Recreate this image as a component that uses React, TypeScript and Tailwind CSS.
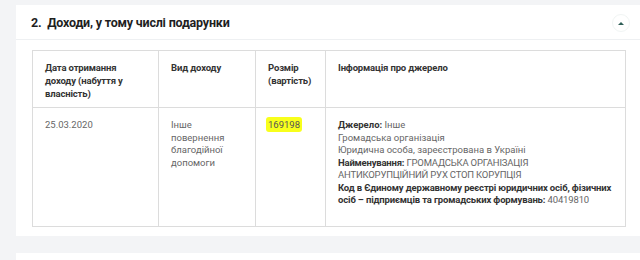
import React from 'react';

const font = { fontFamily: 'Roboto, "Liberation Sans", Arial, sans-serif' };

const cell = 'border border-[#dcdcdc] px-3 align-top whitespace-nowrap';

export default function App() {
  return (
    <div className="h-screen overflow-hidden bg-[#f3f4f6] pl-4 pt-[5px]" style={font}>
      <section className="bg-white">
        {/* Section header */}
        <div className="flex h-[35px] items-center justify-between border-b border-[#eef0f2] pl-[15px] pr-[10px] pt-[2px]">
          <h2 className="text-[12.5px] font-bold tracking-[-0.2px] text-[#1f1f1f]">
            2.&nbsp;&nbsp;Доходи, у тому числі подарунки
          </h2>
          <div className="flex h-[18px] w-[18px] items-center justify-center rounded-full border border-[#f1f5f4]">
            <svg width="6" height="4" viewBox="0 0 6 4">
              <path d="M0 4 L3 1 L6 4 Z" fill="#2f5f57" />
            </svg>
          </div>
        </div>

        {/* Table */}
        <div className="pb-[9px] pl-4 pt-[10px]">
          <table className="w-[593px] table-fixed border-collapse border border-[#dcdcdc] text-left">
            <colgroup>
              <col className="w-[126px]" />
              <col className="w-[97px]" />
              <col className="w-[70px]" />
              <col className="w-[300px]" />
            </colgroup>
            <thead>
              <tr className="h-[57px] text-[9.5px] font-bold leading-[13px] tracking-[-0.15px] text-[#333]">
                <th className={`${cell} pt-[10px] font-bold`}>
                  <div>Дата отримання</div>
                  <div>доходу (набуття у</div>
                  <div>власність)</div>
                </th>
                <th className={`${cell} pt-[10px] font-bold`}>Вид доходу</th>
                <th className={`${cell} pt-[10px] font-bold`}>
                  <div>Розмір</div>
                  <div>(вартість)</div>
                </th>
                <th className={`${cell} pt-[10px] font-bold`}>Інформація про джерело</th>
              </tr>
            </thead>
            <tbody>
              <tr className="h-[119px] text-[9.5px] leading-[12.5px] text-[#666]">
                <td className={`${cell} pt-[11px]`}>25.03.2020</td>
                <td className={`${cell} pt-[11px]`}>
                  <div>Інше</div>
                  <div>повернення</div>
                  <div>благодійної</div>
                  <div>допомоги</div>
                </td>
                <td className={`${cell} pt-[11px]`}>
                  <span className="-mx-[2px] rounded-[3px] bg-[#f8ff1c] px-[2px] py-[2px] text-[#555]">169198</span>
                </td>
                <td className={`${cell} pt-[11px]`}>
                  <div>
                    <b className="font-bold text-[#333]">Джерело:</b> Інше
                  </div>
                  <div>Громадська організація</div>
                  <div>Юридична особа, зареєстрована в Україні</div>
                  <div className="tracking-[-0.2px]">
                    <b className="font-bold text-[#333]">Найменування:</b> ГРОМАДСЬКА ОРГАНІЗАЦІЯ
                  </div>
                  <div className="tracking-[-0.2px]">АНТИКОРУПЦІЙНИЙ РУХ СТОП КОРУПЦІЯ</div>
                  <div className="tracking-[-0.15px]">
                    <b className="font-bold text-[#333]">Код в Єдиному державному реєстрі юридичних осіб, фізичних</b>
                  </div>
                  <div className="tracking-[-0.15px]">
                    <b className="font-bold text-[#333]">осіб – підприємців та громадських формувань:</b> 40419810
                  </div>
                </td>
              </tr>
            </tbody>
          </table>
        </div>
      </section>

      <section className="mt-[17px] h-[40px] bg-white" />
    </div>
  );
}
